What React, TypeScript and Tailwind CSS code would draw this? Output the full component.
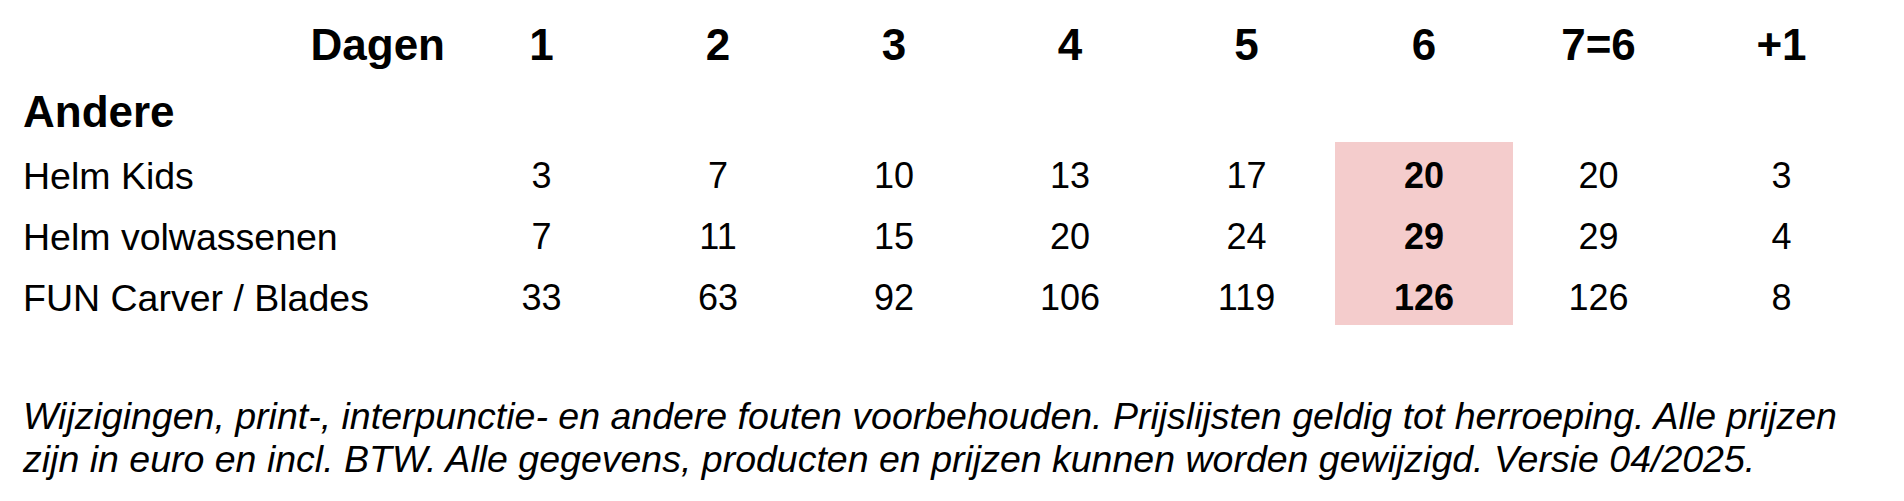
const days = ["1", "2", "3", "4", "5", "6", "7=6", "+1"];

const rows = [
  { name: "Helm Kids", prices: [3, 7, 10, 13, 17, 20, 20, 3] },
  { name: "Helm volwassenen", prices: [7, 11, 15, 20, 24, 29, 29, 4] },
  { name: "FUN Carver / Blades", prices: [33, 63, 92, 106, 119, 126, 126, 8] },
];

const App = () => {
  return (
    <div className="min-h-screen bg-white text-black font-['Liberation_Sans',Arial,sans-serif] pt-[8px] pl-[23px]">
      <div className="grid grid-cols-[430px_177px_176px_176px_176px_177px_178px_171px_195px]">
        {/* Header */}
        <div className="text-right pr-[8px] text-[44px] font-bold leading-[74px]">Dagen</div>
        {days.map((d) => (
          <div key={d} className="text-center text-[44px] font-bold leading-[74px]">
            {d}
          </div>
        ))}

        {/* Section title */}
        <div className="col-span-9 text-[44px] font-bold leading-[60px]">Andere</div>

        {/* Price rows */}
        {rows.map((row) => (
          <div key={row.name} className="contents">
            <div className="h-[61px] pt-[7px] text-[37.5px] leading-[54px] whitespace-nowrap">{row.name}</div>
            {row.prices.map((p, i) => (
              <div
                key={i}
                className={
                  i === 5
                    ? "h-[61px] pt-[7px] text-center text-[36px] leading-[54px] font-bold bg-[#f4cccc]"
                    : "h-[61px] pt-[7px] text-center text-[36px] leading-[54px]"
                }
              >
                {p}
              </div>
            ))}
          </div>
        ))}
      </div>

      {/* Footer note */}
      <p className="mt-[70px] text-[37.5px] italic leading-[43px] whitespace-nowrap">
        Wijzigingen, print-, interpunctie- en andere fouten voorbehouden. Prijslijsten geldig tot herroeping. Alle prijzen
        <br />
        zijn in euro en incl. BTW. Alle gegevens, producten en prijzen kunnen worden gewijzigd. Versie 04/2025.
      </p>
    </div>
  );
};

export default App;
